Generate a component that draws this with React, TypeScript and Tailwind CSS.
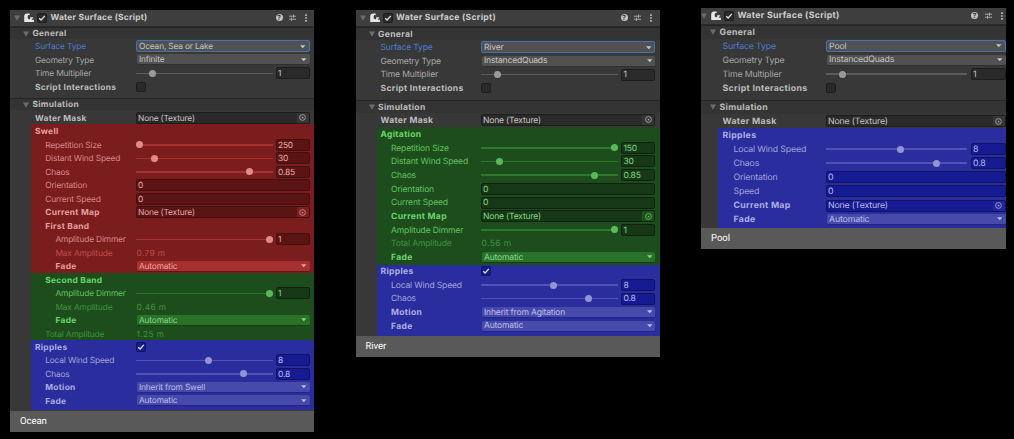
import React from "react";
import clsx from "clsx";

type Tone = "gray" | "red" | "green" | "blue";

type Row = {
  label: string;
  indent?: 0 | 1 | 2;
  bold?: boolean;
  active?: boolean;
  dim?: boolean;
  kind: "heading" | "select" | "slider" | "check" | "object" | "input" | "text";
  value?: string;
  pos?: number;
  on?: boolean;
};

const text: Record<Tone, string> = {
  gray: "text-[#a8a8a8]",
  red: "text-[#d98a8a]",
  green: "text-[#5fc35f]",
  blue: "text-[#a3a5dc]",
};
const boldText: Record<Tone, string> = {
  gray: "text-[#bcbcbc]",
  red: "text-[#e5a0a0]",
  green: "text-[#6bd66b]",
  blue: "text-[#adafe4]",
};
const dimText: Record<Tone, string> = {
  gray: "text-[#777777]",
  red: "text-[#c04c4c]",
  green: "text-[#3c943c]",
  blue: "text-[#6668b8]",
};
const surface: Record<Tone, string> = {
  gray: "bg-[#383838]",
  red: "bg-[#7b1d1d]",
  green: "bg-[#1e4d1d]",
  blue: "bg-[#292d9d]",
};
const box: Record<Tone, string> = {
  gray: "bg-[#2a2a2a] border-[#1d1d1d]",
  red: "bg-[#5a1414] border-[#431010]",
  green: "bg-[#163816] border-[#0d230d]",
  blue: "bg-[#171b92] border-[#10135f]",
};
const menu: Record<Tone, string> = {
  gray: "bg-[#515151] border-[#303030]",
  red: "bg-[#a62f2f] border-[#641616]",
  green: "bg-[#2a712a] border-[#173d17]",
  blue: "bg-[#474aaa] border-[#222585]",
};
const menuText: Record<Tone, string> = {
  gray: "text-[#c6c6c6]",
  red: "text-[#eaa8a8]",
  green: "text-[#82d882]",
  blue: "text-[#bcbeea]",
};
const track: Record<Tone, string> = {
  gray: "bg-[#5c5c5c]",
  red: "bg-[#a83030]",
  green: "bg-[#2c782c]",
  blue: "bg-[#5053b3]",
};
const knob: Record<Tone, string> = {
  gray: "bg-[#999999]",
  red: "bg-[#e08c8c]",
  green: "bg-[#58bb58]",
  blue: "bg-[#9294d4]",
};
const picker: Record<Tone, string> = {
  gray: "bg-[#363636]",
  red: "bg-[#7c1f1f]",
  green: "bg-[#1f501f]",
  blue: "bg-[#22269a]",
};
const indents = [
  "pl-[calc(var(--label)-var(--over))]",
  "pl-[calc(var(--label)-var(--over)+var(--step))]",
  "pl-[calc(var(--label)-var(--over)+var(--step)*2)]",
];

function Check({ tone, on }: { tone: Tone; on?: boolean }) {
  return (
    <span className={clsx("flex size-[10px] shrink-0 items-center justify-center rounded-[2px] border", box[tone])}>
      {on && (
        <svg viewBox="0 0 8 8" className="size-[8px] shrink-0 fill-none stroke-[#e2e2e6] stroke-[1.3]">
          <path d="M1.2 4.2 3.1 6 6.8 1.9" />
        </svg>
      )}
    </span>
  );
}

function Fold() {
  return (
    <svg viewBox="0 0 6 6" className="size-[6px] shrink-0 fill-[#6c6c6c]">
      <path d="M0 .5h6L3 5.7z" />
    </svg>
  );
}

function Value({ children }: { children?: string }) {
  return <span className="pt-[1.5px] tracking-[var(--vt)]">{children}</span>;
}

function Field({ row, tone }: { row: Row; tone: Tone }) {
  switch (row.kind) {
    case "select":
      return (
        <div
          className={clsx(
            "flex flex-1 items-center justify-between rounded-[2px] border pr-[3px]",
            row.active ? "h-[12px] border-[#3f73b5] bg-[#515151] pl-[2px]" : clsx("ml-[0.5px] h-[11px] border-0 border-b pl-[2.5px]", menu[tone]),
            menuText[tone],
          )}
        >
          <Value>{row.value}</Value>
          <svg viewBox="0 0 6 4" className="h-[3.5px] w-[5.5px] fill-current">
            <path d="M0 .3h6L3 3.8z" />
          </svg>
        </div>
      );
    case "slider":
      return (
        <div className="flex flex-1 items-center justify-between">
          <div className={clsx("relative h-[1.5px] w-[var(--track)]", track[tone])}>
            <span
              className={clsx("absolute -top-[2.75px] -ml-[3.5px] size-[7px] rounded-full", knob[tone])}
              style={{ left: `${(row.pos ?? 0) * 100}%` }}
            />
          </div>
          <div className={clsx("flex h-[12px] w-[var(--num)] items-center rounded-[2px] border pl-[1.5px]", box[tone], menuText[tone])}>
            <Value>{row.value}</Value>
          </div>
        </div>
      );
    case "input":
      return (
        <div className={clsx("flex h-[12px] flex-1 items-center rounded-[2px] border pl-[1px]", box[tone], menuText[tone])}>
          <Value>{row.value}</Value>
        </div>
      );
    case "object":
      return (
        <div
          className={clsx(
            "flex h-[12px] flex-1 items-center justify-between overflow-hidden rounded-[2px] border pl-[1px]",
            box[tone],
            menuText[tone],
          )}
        >
          <Value>{row.value}</Value>
          <span className={clsx("flex h-full w-[12px] items-center justify-center", picker[tone], text[tone])}>
            <svg viewBox="0 0 8 8" className="size-[7px] fill-none stroke-current">
              <circle cx="4" cy="4" r="3.3" />
              <circle cx="4" cy="4" r="1" className="fill-current stroke-none" />
            </svg>
          </span>
        </div>
      );
    case "check":
      return <Check tone={tone} on={row.on} />;
    case "text":
      return <span className={clsx("pt-[1.5px] pl-[0.5px] tracking-[0.35px]", dimText[tone])}>{row.value}</span>;
    default:
      return null;
  }
}

function Rows({ rows, tone }: { rows: Row[]; tone: Tone }) {
  return (
    <>
      {rows.map((row, i) => (
        <div key={i} className="flex h-[var(--row)] items-center pr-[var(--right)]">
          <div
            className={clsx(
              "w-[calc(var(--field)-var(--over))] shrink-0 pt-[1.5px]",
              indents[row.indent ?? 0],
              row.bold ? "font-bold tracking-[var(--bt)]" : "tracking-[var(--lt)]",
              row.active ? "text-[#4a7fd0]" : row.dim ? dimText[tone] : row.bold ? boldText[tone] : text[tone],
            )}
          >
            {row.label}
          </div>
          <Field row={row} tone={tone} />
        </div>
      ))}
    </>
  );
}

function Block({ tone, className, rows }: { tone: Tone; className?: string; rows: Row[] }) {
  return (
    <div className={clsx("ml-[var(--over)] shrink-0", surface[tone], className)}>
      <Rows rows={rows} tone={tone} />
    </div>
  );
}

function Caption({ children }: { children: string }) {
  return (
    <div className="flex h-[var(--cap)] shrink-0 items-center gap-[3.5px] border-t border-[#252525] bg-[#343434] pl-[var(--fold)] font-bold tracking-[var(--bt)] text-[#bcbcbc]">
      <Fold />
      <span className="pt-[1.5px]">{children}</span>
    </div>
  );
}

function TitleBar() {
  return (
    <div className="flex h-[17px] shrink-0 items-center border-b border-[#2a2a2a] bg-[#3e3e3e] pr-[var(--tools)] pb-[1px] pl-[var(--head)]">
      <Fold />
      <svg viewBox="0 0 10 9" className="ml-[4px] h-[9px] w-[10px] shrink-0 fill-[#e6e6e6]">
        <path d="M.2 9V3.500C.2 1.500 1.400.4 3 .4h2.700v1.700H4.300L3.700 3v2.200c.5.900 1.500 1.200 2.500.8V4.200h2.900v1.200H7.900v1.300h2V9z" />
      </svg>
      <span className="ml-[3px] flex">
        <Check tone="gray" on />
      </span>
      <span className="ml-[3.5px] flex-1 pt-[1px] font-bold tracking-[var(--tt)] text-[#cdcdcd]">Water Surface (Script)</span>
      <span className="flex size-[7px] items-center justify-center rounded-full bg-[#c4c4c4] text-[7px] leading-none font-bold text-[#3e3e3e]">?</span>
      <svg viewBox="0 0 8 8" className="ml-[6.5px] size-[7px] fill-none stroke-[#bdbdbd]">
        <path d="M0 2.500h4.500M6 2.500h2M5.200.7v3.600M0 6h2M3.500 6H8M2.800 4.200v3.600" />
      </svg>
      <svg viewBox="0 0 2 8" className="ml-[9px] h-[8px] w-[2px] fill-[#c4c4c4]">
        <path d="M.2.3h1.600v1.600H.2zM.2 3.200h1.600v1.600H.2zM.2 6.100h1.600v1.600H.2z" />
      </svg>
    </div>
  );
}

function Footer({ children }: { children: string }) {
  return (
    <div className="flex h-[21px] shrink-0 items-center bg-[#595959] pt-[1px] pl-[10px] font-[Roboto,sans-serif] text-[9.6px] tracking-[-0.1px] text-white">
      {children}
    </div>
  );
}

const general = (type: string, geometry: string): Row[] => [
  { label: "Surface Type", kind: "select", value: type, active: true },
  { label: "Geometry Type", kind: "select", value: geometry },
  { label: "Time Multiplier", kind: "slider", value: "1", pos: 0.119 },
  { label: "Script Interactions", kind: "check", bold: true },
];

const waterMask: Row[] = [{ label: "Water Mask", kind: "object", bold: true, value: "None (Texture)" }];

const wind = (size: string, pos: number): Row[] => [
  { label: "Repetition Size", indent: 1, kind: "slider", value: size, pos },
  { label: "Distant Wind Speed", indent: 1, kind: "slider", value: "30", pos: 0.137 },
  { label: "Chaos", indent: 1, kind: "slider", value: "0.85", pos: 0.832 },
  { label: "Orientation", indent: 1, kind: "input", value: "0" },
  { label: "Current Speed", indent: 1, kind: "input", value: "0" },
  { label: "Current Map", indent: 1, kind: "object", bold: true, value: "None (Texture)" },
];

const band = (amplitude: string): Row[] => [
  { label: "Amplitude Dimmer", indent: 2, kind: "slider", value: "1", pos: 0.975 },
  { label: "Max Amplitude", indent: 2, kind: "text", dim: true, value: amplitude },
  { label: "Fade", indent: 2, kind: "select", bold: true, value: "Automatic" },
];

const ripples: Row[] = [
  { label: "Local Wind Speed", indent: 1, kind: "slider", value: "8", pos: 0.528 },
  { label: "Chaos", indent: 1, kind: "slider", value: "0.8", pos: 0.785 },
];

const fade: Row = { label: "Fade", indent: 1, kind: "select", bold: true, value: "Automatic" };

function Ocean() {
  return (
    <section className="mt-[10px] flex h-[422px] w-[304px] shrink-0 flex-col overflow-hidden bg-[#383838] text-[8.400px] leading-[10px] [--bt:0.3px] [--cap:12px] [--field:126px] [--fold:13px] [--head:4px] [--label:25px] [--lt:-0.17px] [--num:34px] [--over:21px] [--right:4.500px] [--row:13.500px] [--step:10.200px] [--tools:7px] [--track:137px] [--tt:0.25px] [--vt:-0.18px]">
      <TitleBar />
      <Caption>General</Caption>
      <Block tone="gray" className="mt-[0.500px] h-[58.500px]" rows={general("Ocean, Sea or Lake", "Infinite")} />
      <Caption>Simulation</Caption>
      <Block tone="gray" className="mt-[1px] h-[13px]" rows={waterMask} />
      <Block
        tone="red"
        className="h-[149px] pt-[0.500px]"
        rows={[
          { label: "Swell", kind: "heading", bold: true },
          ...wind("250", 0.024),
          { label: "First Band", indent: 1, kind: "heading", bold: true },
          ...band("0.79 m"),
        ]}
      />
      <Block
        tone="green"
        className="h-[66.500px]"
        rows={[
          { label: "Second Band", indent: 1, kind: "heading", bold: true },
          ...band("0.46 m"),
          { label: "Total Amplitude", indent: 1, kind: "text", dim: true, value: "1.25 m" },
        ]}
      />
      <Block
        tone="blue"
        className="h-[70px] pt-[0.500px]"
        rows={[
          { label: "Ripples", kind: "check", bold: true, on: true },
          ...ripples,
          { label: "Motion", indent: 1, kind: "select", bold: true, value: "Inherit from Swell" },
          fade,
        ]}
      />
      <div className="flex-1" />
      <Footer>Ocean</Footer>
    </section>
  );
}

function River() {
  return (
    <section className="mt-[10px] ml-[41.500px] flex h-[346.500px] w-[304.500px] shrink-0 flex-col overflow-hidden bg-[#383838] text-[8.550px] leading-[10px] [--bt:0.32px] [--cap:13px] [--field:125.500px] [--fold:13px] [--head:4px] [--label:25px] [--lt:-0.15px] [--num:34px] [--over:21.500px] [--right:5px] [--row:13.700px] [--step:10.500px] [--tools:8px] [--track:136.500px] [--tt:0.3px] [--vt:-0.18px]">
      <TitleBar />
      <Caption>General</Caption>
      <Block tone="gray" className="mt-[0.500px] h-[59.500px]" rows={general("River", "InstancedQuads")} />
      <Caption>Simulation</Caption>
      <Block tone="gray" className="h-[14px]" rows={waterMask} />
      <Block
        tone="green"
        className="h-[137.500px] pt-[0.250px]"
        rows={[
          { label: "Agitation", kind: "heading", bold: true },
          ...wind("150", 0.975),
          { label: "Amplitude Dimmer", indent: 1, kind: "slider", value: "1", pos: 0.975 },
          { label: "Total Amplitude", indent: 1, kind: "text", dim: true, value: "0.56 m" },
          fade,
        ]}
      />
      <Block
        tone="blue"
        className="flex-1"
        rows={[
          { label: "Ripples", kind: "check", bold: true, on: true },
          ...ripples,
          { label: "Motion", indent: 1, kind: "select", bold: true, value: "Inherit from Agitation" },
          fade,
        ]}
      />
      <Footer>River</Footer>
    </section>
  );
}

function Pool() {
  return (
    <section className="mt-[8px] ml-[41px] flex h-[241px] w-[304.500px] shrink-0 flex-col overflow-hidden bg-[#383838] text-[8.750px] leading-[10px] [--bt:0.32px] [--cap:13.500px] [--field:125px] [--fold:9px] [--head:0px] [--label:21.500px] [--lt:-0.15px] [--num:35px] [--over:17px] [--right:0px] [--row:14.100px] [--step:11px] [--tools:3px] [--track:141px] [--tt:0.3px] [--vt:-0.15px]">
      <TitleBar />
      <Caption>General</Caption>
      <Block tone="gray" className="mt-[0.500px] h-[61px]" rows={general("Pool", "InstancedQuads")} />
      <Caption>Simulation</Caption>
      <Block tone="gray" className="mt-[0.500px] h-[14px]" rows={waterMask} />
      <Block
        tone="blue"
        className="flex-1"
        rows={[
          { label: "Ripples", kind: "heading", bold: true },
          ...ripples,
          { label: "Orientation", indent: 1, kind: "input", value: "0" },
          { label: "Speed", indent: 1, kind: "input", value: "0" },
          { label: "Current Map", indent: 1, kind: "object", bold: true, value: "None (Texture)" },
          fade,
        ]}
      />
      <Footer>Pool</Footer>
    </section>
  );
}

export default function App() {
  return (
    <main className="flex h-[439px] w-[1014px] items-start overflow-hidden bg-black pl-[10px] font-[Inter,sans-serif] whitespace-nowrap [text-rendering:geometricPrecision]">
      <Ocean />
      <River />
      <Pool />
    </main>
  );
}
